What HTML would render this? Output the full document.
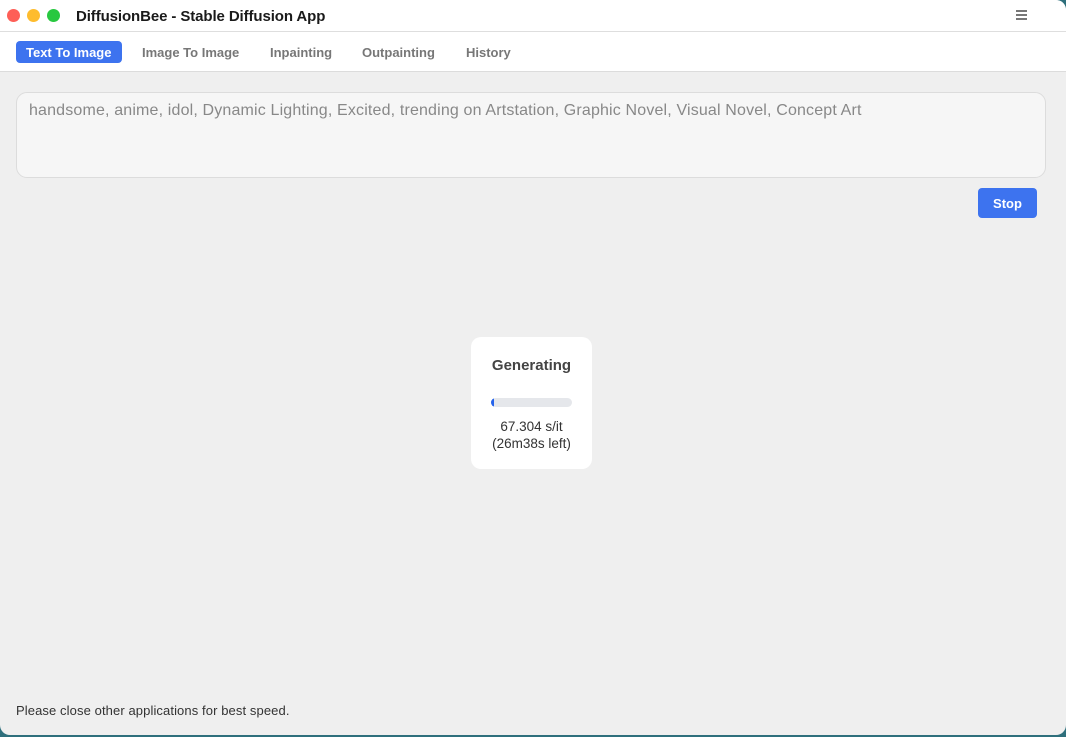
<!DOCTYPE html>
<html><head><meta charset="utf-8"><style>
*{margin:0;padding:0;box-sizing:border-box}
html,body{width:1066px;height:737px;overflow:hidden;background:#2e6f7c;font-family:"Liberation Sans",sans-serif}
.win{position:absolute;left:0;top:0;width:1066px;height:735px;background:#efefef;border-radius:0 10px 10px 10px;overflow:hidden}
.title{height:32px;background:#fff;border-bottom:1px solid #dedede;position:relative}
.dot{position:absolute;top:9px;width:13px;height:13px;border-radius:50%}
.title .t{position:absolute;left:76px;top:8px;font-size:15px;font-weight:bold;color:#1a1a1a;letter-spacing:-0.1px}
.menu{position:absolute;left:1016px;top:10px;width:11px}
.menu i{display:block;height:2px;background:#777;margin-bottom:2px}
.tabs{height:40px;background:#fff;border-bottom:1px solid #dcdcdc;position:relative}
.tab{position:absolute;top:9px;height:22px;line-height:23px;font-size:13px;font-weight:bold;color:#777}
.tab.a{background:#3d73ef;color:#fff;border-radius:4px;padding:0 10px;left:16px;width:106px}
.prompt{position:absolute;left:16px;top:92px;width:1030px;height:86px;background:#f6f6f6;border:1px solid #dcdcdc;border-radius:11px;padding:9px 12px;font-size:16px;color:#888;letter-spacing:0.16px}
.stop{position:absolute;left:978px;top:188px;width:59px;height:30px;background:#3d73ef;border-radius:4px;color:#fff;font-size:13px;font-weight:bold;text-align:center;line-height:31px}
.card{position:absolute;left:471px;top:337px;width:121px;height:132px;background:#fff;border-radius:10px;text-align:center}
.card .g{margin-top:20px;font-size:15px;font-weight:bold;color:#444}
.bar{position:absolute;left:20px;top:61px;width:81px;height:9px;background:#e5e7eb;border-radius:5px;overflow:hidden}
.bar i{display:block;width:3px;height:9px;background:#2563eb;border-radius:3px}
.card .s{position:absolute;left:0;right:0;top:81px;font-size:13.5px;color:#333;line-height:17px}
.foot{position:absolute;left:16px;top:703px;font-size:13px;color:#333;letter-spacing:0.1px}
</style></head><body>
<div class="win">
 <div class="title">
  <div class="dot" style="left:7px;background:#fe5f57"></div>
  <div class="dot" style="left:27px;background:#febc2e"></div>
  <div class="dot" style="left:47px;background:#28c840"></div>
  <div class="t">DiffusionBee - Stable Diffusion App</div>
  <div class="menu"><i></i><i></i><i></i></div>
 </div>
 <div class="tabs">
  <div class="tab a">Text To Image</div>
  <div class="tab" style="left:142px">Image To Image</div>
  <div class="tab" style="left:270px">Inpainting</div>
  <div class="tab" style="left:362px">Outpainting</div>
  <div class="tab" style="left:466px">History</div>
 </div>
 <div class="prompt">handsome, anime, idol, Dynamic Lighting, Excited, trending on Artstation, Graphic Novel, Visual Novel, Concept Art</div>
 <div class="stop">Stop</div>
 <div class="card">
  <div class="g">Generating</div>
  <div class="bar"><i></i></div>
  <div class="s">67.304 s/it<br>(26m38s left)</div>
 </div>
 <div class="foot">Please close other applications for best speed.</div>
</div>
</body></html>
